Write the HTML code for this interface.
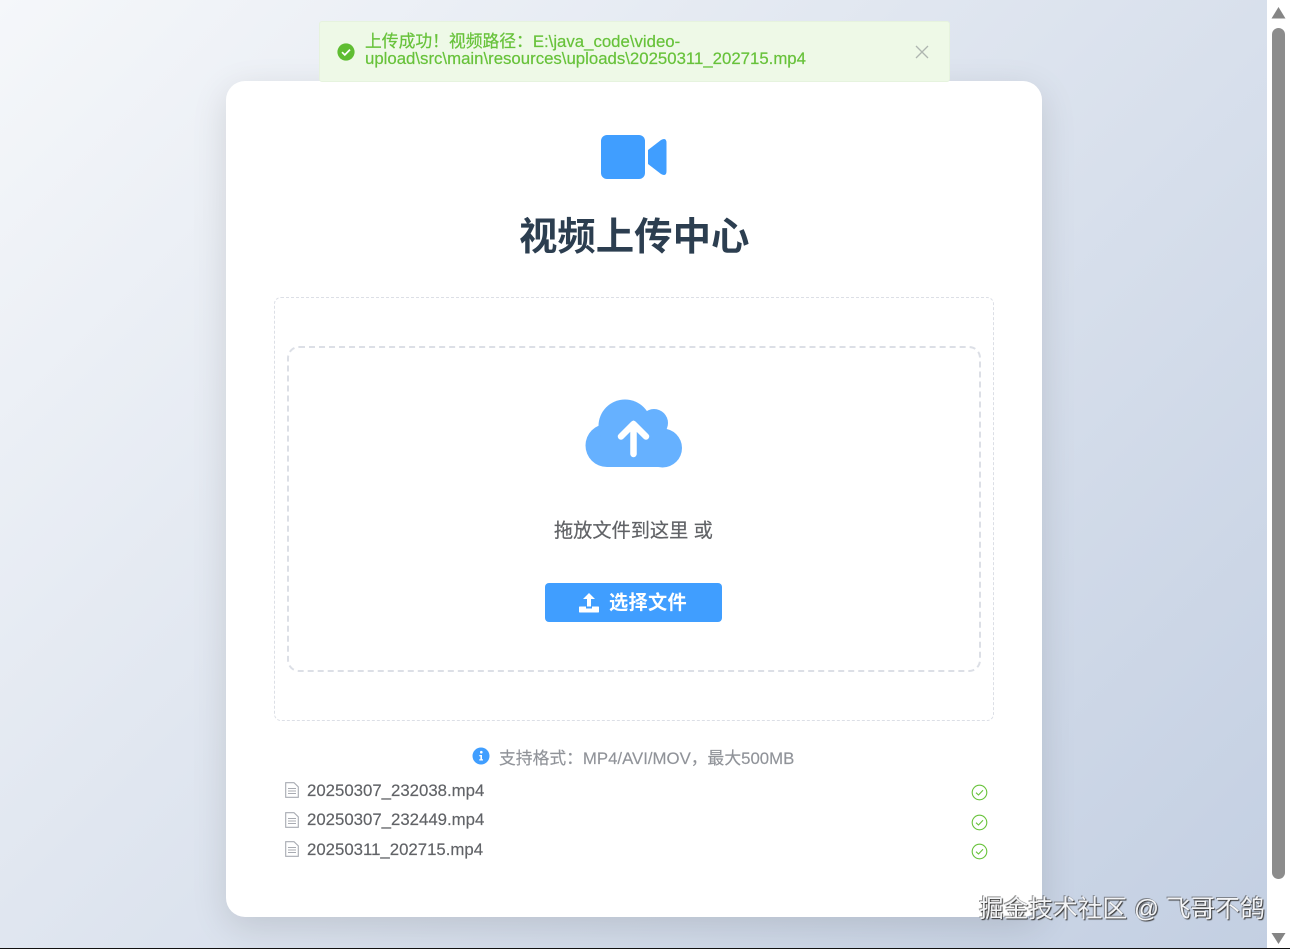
<!DOCTYPE html>
<html lang="zh-CN"><head><meta charset="utf-8"><title>视频上传中心</title>
<style>
*{box-sizing:border-box}
html,body{margin:0;width:1290px;height:949px;overflow:hidden;background:#fff}
body{position:relative;font-family:"Liberation Sans","Noto Sans CJK SC",sans-serif}
.t{position:absolute;white-space:nowrap;line-height:1}
.abs{position:absolute}
#bg{left:0;top:0;width:1267px;height:948px;background:linear-gradient(135deg,#f5f7fa 0%,#c3cfe2 100%)}
#card{left:226px;top:81px;width:816px;height:836px;background:#fff;border-radius:19px;box-shadow:0 10px 36px rgba(0,0,0,.12)}
#msg{left:319px;top:21px;width:631px;height:61px;background:#eef9e7;border:1px solid #e6f3de;border-radius:3px}
#outer{left:274px;top:297px;width:720px;height:424px;border:1px dashed #dcdfe6;border-radius:7px}
#inner{left:287px;top:346px;width:694px;height:326px;border:2px dashed #dcdfe6;border-radius:12px}
#btn{left:545px;top:583px;width:177px;height:39px;background:#409eff;border-radius:4px}
.f{color:#606266;font-size:16.8px;-webkit-text-stroke:.15px #606266}
</style></head><body>
<div class="abs" id="bg"></div>
<div class="abs" id="card"></div>
<div class="abs" id="msg"></div>
<svg class="abs" style="left:337px;top:43px" width="18" height="18" viewBox="0 0 18 18"><circle cx="9" cy="9" r="8.6" fill="#5fbd32"/><path d="M5 9.2l2.8 2.7L13 6.600" fill="none" stroke="#fff" stroke-width="1.700"/></svg>
<div class="t" style="left:365px;top:33px;color:#67c23a;font-size:16.8px;line-height:17px;white-space:nowrap;-webkit-text-stroke:.2px #67c23a">上传成功！视频路径：E:\java_code\video-<br>upload\src\main\resources\uploads\20250311_202715.mp4</div>
<svg class="abs" style="left:915px;top:45px" width="14" height="14" viewBox="0 0 14 14"><path d="M1 1l12 12M13 1L1 13" stroke="#aeb6b0" stroke-width="1.300" fill="none"/></svg>

<svg class="abs" style="left:600px;top:134px" width="68" height="46" viewBox="600 134 68 46"><rect x="601" y="135" width="44" height="44" rx="6" fill="#409eff"/><path d="M648 150L661 140Q666.500 137 666.500 143V171Q666.500 177 661 174L648 164Z" fill="#409eff"/></svg>
<div class="t" style="left:519px;top:218px;font-size:38.400px;font-weight:700;color:#2c3e50;line-height:40px">视频上传中心</div>

<div class="abs" id="outer"></div>
<div class="abs" id="inner"></div>

<svg class="abs" style="left:584px;top:398px" width="100" height="70" viewBox="584 398 100 70"><g fill="#66b1ff"><circle cx="607" cy="445.500" r="21.500"/><circle cx="625" cy="426" r="26.500"/><circle cx="654" cy="423" r="14"/><circle cx="662.500" cy="448" r="19.500"/><rect x="607" y="430" width="55" height="37"/></g><path d="M633.500 454V424M621 436.500L633.500 424L646 436.500" fill="none" stroke="#fff" stroke-width="6.500" stroke-linecap="round" stroke-linejoin="round"/></svg>

<div class="t" style="left:554px;top:522px;font-size:19.200px;color:#606266;line-height:20px;-webkit-text-stroke:.2px #606266">拖放文件到这里 或</div>

<div class="abs" id="btn"></div>
<svg class="abs" style="left:578px;top:591px" width="22" height="22" viewBox="0 0 22 22"><path d="M11 2L5 8H9V15.500H13V8H17Z" fill="#fff"/><path d="M1.500 15.500H8V17.500H14V15.500H20.500A.8.8 0 0 1 21 16V21A.8.8 0 0 1 20.500 21.500H1.500A.8.8 0 0 1 1 21V16A.8.8 0 0 1 1.500 15.500Z" fill="#fff"/></svg>
<div class="t" style="left:609px;top:594px;font-size:19.200px;font-weight:700;color:#fff;line-height:20px;letter-spacing:.3px">选择文件</div>

<svg class="abs" style="left:472px;top:747px" width="18" height="18" viewBox="0 0 18 18"><circle cx="9" cy="9" r="8.500" fill="#409eff"/><circle cx="9.300" cy="5.200" r="1.300" fill="#fff"/><path d="M7.300 8H10V12.300H11V13.500H7.300V12.300H8.400V9.200H7.300Z" fill="#fff"/></svg>
<div class="t" style="left:499px;top:750px;font-size:16.800px;color:#909399;line-height:18px;-webkit-text-stroke:.15px #909399">支持格式：MP4/AVI/MOV，最大500MB</div>

<svg class="abs" style="left:285px;top:782px" width="14" height="16" viewBox="0 0 14 16"><path d="M.7.700H9L13.300 4.800V15.300H.7ZM3 6.500H11M3 9H11M3 11.500H11" fill="none" stroke="#a8abb2" stroke-width="1.100"/></svg>
<div class="t f" style="left:307px;top:782px;line-height:18px">20250307_232038.mp4</div>
<svg class="abs" style="left:285px;top:812px" width="14" height="16" viewBox="0 0 14 16"><path d="M.7.700H9L13.300 4.800V15.300H.7ZM3 6.500H11M3 9H11M3 11.500H11" fill="none" stroke="#a8abb2" stroke-width="1.100"/></svg>
<div class="t f" style="left:307px;top:811px;line-height:18px">20250307_232449.mp4</div>
<svg class="abs" style="left:285px;top:841px" width="14" height="16" viewBox="0 0 14 16"><path d="M.7.700H9L13.300 4.800V15.300H.7ZM3 6.500H11M3 9H11M3 11.500H11" fill="none" stroke="#a8abb2" stroke-width="1.100"/></svg>
<div class="t f" style="left:307px;top:841px;line-height:18px">20250311_202715.mp4</div>

<svg class="abs" style="left:971px;top:784px" width="17" height="17" viewBox="0 0 17 17"><circle cx="8.500" cy="8.500" r="7.300" fill="none" stroke="#67c23a" stroke-width="1.100"/><path d="M5 8.700L7.500 11L12 6.300" fill="none" stroke="#67c23a" stroke-width="1.100"/></svg>
<svg class="abs" style="left:971px;top:814px" width="17" height="17" viewBox="0 0 17 17"><circle cx="8.500" cy="8.500" r="7.300" fill="none" stroke="#67c23a" stroke-width="1.100"/><path d="M5 8.700L7.500 11L12 6.300" fill="none" stroke="#67c23a" stroke-width="1.100"/></svg>
<svg class="abs" style="left:971px;top:843px" width="17" height="17" viewBox="0 0 17 17"><circle cx="8.500" cy="8.500" r="7.300" fill="none" stroke="#67c23a" stroke-width="1.100"/><path d="M5 8.700L7.500 11L12 6.300" fill="none" stroke="#67c23a" stroke-width="1.100"/></svg>

<div class="t" style="left:979px;top:896px;font-size:24.700px;color:#f4f5f7;line-height:28px;text-shadow:1px 1px 1px #333,-1px -1px 0 rgba(80,80,80,.6)">掘金技术社区 @ 飞哥不鸽</div>

<div class="abs" style="left:1267px;top:0;width:23px;height:948px;background:#fff"></div>
<div class="abs" style="left:1272px;top:28px;width:13px;height:851px;background:#8c8c8c;border-radius:7px"></div>
<svg class="abs" style="left:1271px;top:7px" width="15" height="12"><path d="M7.500 0L14.500 11.500H.5Z" fill="#858585"/></svg>
<svg class="abs" style="left:1271px;top:933px" width="15" height="11"><path d="M.5 0H14.500L7.500 11Z" fill="#858585"/></svg>
<div class="abs" style="left:0;top:948px;width:1290px;height:1px;background:#111"></div>
</body></html>
